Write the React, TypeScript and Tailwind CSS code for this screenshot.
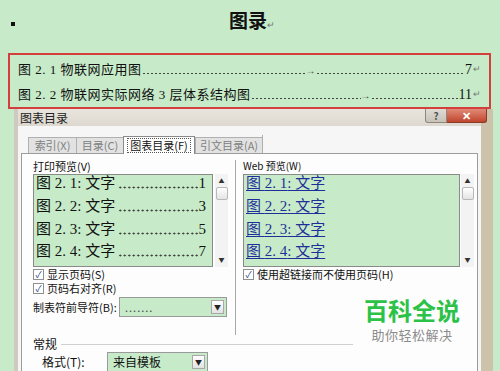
import { ReactNode } from 'react';

const serif = { fontFamily: '"Liberation Serif", "Noto Sans CJK SC", serif' };
const ui = { fontFamily: '"Noto Sans CJK SC", "Liberation Sans", sans-serif' };

function Dots({ className = '' }: { className?: string }) {
  return (
    <span
      className={`block h-[3px] bg-[radial-gradient(circle,#444_0.7px,transparent_1.1px)] bg-[length:4px_3px] bg-repeat-x ${className}`}
    />
  );
}

function DocRow({ label, arrowAt, page }: { label: string; arrowAt: string; page: string }) {
  return (
    <div className="flex h-[25px] items-center text-[13px] text-[#111]" style={serif}>
      <span className="whitespace-nowrap tracking-[0.5px]">{label}</span>
      <span className="mt-[7px] shrink-0" style={{ width: arrowAt }}>
        <Dots />
      </span>
      <span className="mt-[2px] text-[10px] leading-none text-[#444]">→</span>
      <span className="mt-[7px] min-w-0 flex-1">
        <Dots />
      </span>
      <span className="text-[14px]">{page}</span>
      <span className="ml-[1px] text-[9px] text-[#777]">↵</span>
    </div>
  );
}

function Tab({ children, width, active = false }: { children: ReactNode; width: string; active?: boolean }) {
  return (
    <div
      style={{ width }}
      className={
        active
          ? 'relative -mb-px flex h-[18px] items-center justify-center border border-b-0 border-[#8a8a8a] bg-white'
          : 'mt-[2px] flex h-[16px] items-center justify-center border border-b-0 border-r-0 border-[#b0b0b0] bg-[#e2e2e2] text-[#808080]'
      }
    >
      {active ? (
        <span className="border border-dotted border-[#555] px-[2px] leading-[13px]">{children}</span>
      ) : (
        children
      )}
    </div>
  );
}

function Scrollbar() {
  return (
    <div className="flex h-full w-[13px] flex-col items-center bg-[#f3f3f3]">
      <span className="mt-[3px] text-[6px] leading-[8px] text-[#333]">▲</span>
      <div className="mt-[2px] h-[13px] w-[12px] rounded-[2px] border border-[#b8b8b8] bg-gradient-to-b from-white to-[#e4e4e4]" />
      <div className="flex-1" />
      <span className="mb-[3px] text-[6px] leading-[8px] text-[#333]">▼</span>
    </div>
  );
}

function Check({ children }: { children: ReactNode }) {
  return (
    <div className="flex h-[14px] items-center gap-[3px] whitespace-nowrap leading-[14px]">
      <div className="flex h-[11px] w-[11px] items-center justify-center border border-[#8f8f8f] bg-white text-[9px] leading-none text-[#2c4a8c]">
        ✓
      </div>
      <span>{children}</span>
    </div>
  );
}

function Combo({ width, children }: { width: string; children: ReactNode }) {
  return (
    <div className="flex h-[20px] items-stretch border border-[#9a9a9a] bg-[#c7ebc9]" style={{ width }}>
      <div className="flex flex-1 items-center px-[5px]">{children}</div>
      <div className="m-[2px] flex w-[13px] items-center justify-center border border-[#a8a8a8] bg-gradient-to-b from-white to-[#e2e2e2] text-[7px] text-[#222]">
        ▼
      </div>
    </div>
  );
}

const printRows = [
  ['2. 1', '1'],
  ['2. 2', '3'],
  ['2. 3', '5'],
  ['2. 4', '7'],
];

export default function App() {
  return (
    <div className="relative h-[371px] w-[500px] overflow-hidden bg-[#c7ebc9]" style={ui}>
      <div className="relative flex h-[53px] items-start justify-center pt-[6px]">
        <span className="absolute left-[11px] top-[22px] h-[4px] w-[4px] bg-[#111]" />
        <span className="ml-[4px] text-[19px] font-bold text-[#111]">
          图录<span className="text-[9px] font-normal text-[#777]">↵</span>
        </span>
      </div>

      <div className="ml-[8px] w-[483px] border-[2px] border-b-0 border-[#d23f3c] px-[8px] pt-[2px]">
        <DocRow label="图 2. 1 物联网应用图" arrowAt="164px" page="7" />
        <DocRow label="图 2. 2 物联网实际网络 3 层体系结构图" arrowAt="110px" page="11" />
      </div>
      <div className="ml-[8px] h-[2px] w-[483px] bg-[#d23f3c]" />

      <div className="ml-[14px] w-[479px] border-l-[4px] border-r-[12px] border-l-[#cfcac0] border-r-[#cdc3ab] bg-[#f6f6f6] text-[11px] text-[#111]">
        <div className="flex h-[17px] items-center justify-between bg-gradient-to-b from-[#e9e5de] to-[#ddd8cf] pl-[2px]">
          <span className="text-[12px] text-[#222]">图表目录</span>
          <div className="flex h-[14px] self-start">
            <div className="flex w-[22px] items-center justify-center rounded-bl-[3px] border border-t-0 border-[#8e877c] bg-gradient-to-b from-[#e0dcd4] to-[#c8c2b8] text-[10px] font-bold text-[#555]">
              ?
            </div>
            <div className="mr-[-6px] flex w-[40px] items-center justify-center rounded-br-[3px] border border-l-0 border-t-0 border-[#8a3a2a] bg-gradient-to-b from-[#e08a76] to-[#c0442c] text-[11px] font-bold text-white">
              ✕
            </div>
          </div>
        </div>

        <div className="px-[3px] pt-[9px]">
          <div className="flex items-end pl-[7px]">
            <Tab width="48px">索引(X)</Tab>
            <Tab width="47px">目录(C)</Tab>
            <Tab width="72px" active>
              图表目录(F)
            </Tab>
            <div className="border-r border-[#b0b0b0]">
              <Tab width="67px">引文目录(A)</Tab>
            </div>
          </div>
          <div className="h-[220px] border border-[#9c9c9c] bg-[#fdfdfd] pl-[11px] pt-[4px]">
            <div className="flex">
              <div className="w-[195px]">
                <div className="h-[16px] text-[11px] leading-[16px]">打印预览(V)</div>
                <div className="flex h-[93px]">
                  <div className="flex min-w-0 flex-1 flex-col border border-[#8a8a8a] bg-[#c7ebc9] px-[2px]" style={serif}>
                    {printRows.map(([n, p]) => (
                      <div key={n} className="flex h-[24px] items-start text-[15px] leading-[16px]">
                        <span className="whitespace-nowrap">图 {n}: 文字</span>
                        <span className="ml-[3px] mt-[11px] min-w-0 flex-1">
                          <span className="block h-[3px] bg-[radial-gradient(circle,#333_0.8px,transparent_1.2px)] bg-[length:4.5px_3px] bg-repeat-x" />
                        </span>
                        <span className="ml-[1px] mr-[4px]">{p}</span>
                      </div>
                    ))}
                  </div>
                  <div className="ml-[2px]">
                    <Scrollbar />
                  </div>
                </div>
                <Check>显示页码(S)</Check>
                <Check>页码右对齐(R)</Check>
                <div className="mt-[2px] flex items-center">
                  <span className="w-[86px] whitespace-nowrap">制表符前导符(B):</span>
                  <Combo width="108px">
                    <span className="tracking-[1px] text-[#444]">.......</span>
                  </Combo>
                </div>
              </div>

              <div className="ml-[7px] mt-[2px] h-[175px] w-px bg-[#a8a8a8]" />

              <div className="ml-[7px] w-[231px]">
                <div className="h-[16px] text-[10px] leading-[16px]">Web 预览(W)</div>
                <div className="flex h-[93px]">
                  <div className="flex min-w-0 flex-1 flex-col border border-[#8a8a8a] bg-[#c7ebc9] px-[2px]" style={serif}>
                    {printRows.map(([n]) => (
                      <div key={n} className="flex h-[24px] items-start text-[15px] leading-[16px] text-[#1f2f99]">
                        <span className="whitespace-nowrap underline underline-offset-2">图 {n}: 文字</span>
                      </div>
                    ))}
                  </div>
                  <div className="ml-[1px]">
                    <Scrollbar />
                  </div>
                </div>
                <Check>使用超链接而不使用页码(H)</Check>
              </div>
            </div>

            <div className="mt-[2px] flex h-[14px] items-center">
              <span className="text-[12px]">常规</span>
              <div className="ml-[4px] h-px w-[292px] bg-[#d0d0d0]" />
            </div>
            <div className="mt-[1px] flex items-center pl-[9px]">
              <span className="w-[65px] text-[12px]">格式(T):</span>
              <Combo width="101px">
                <span className="text-[12px]">来自模板</span>
              </Combo>
            </div>
            <div className="ml-[74px] mt-[2px] h-[20px] w-[101px] border border-[#9a9a9a] bg-[#c7ebc9]" />
          </div>
        </div>
      </div>

      <div className="absolute left-[362px] top-[296px] flex w-[100px] flex-col items-center">
        <span className="text-[24px] font-bold leading-[28px] text-[#2cc247]">百科全说</span>
        <span className="mt-[3px] text-[13px] leading-[16px] tracking-[0.5px] text-[#8c8c8c]">助你轻松解决</span>
      </div>
    </div>
  );
}
